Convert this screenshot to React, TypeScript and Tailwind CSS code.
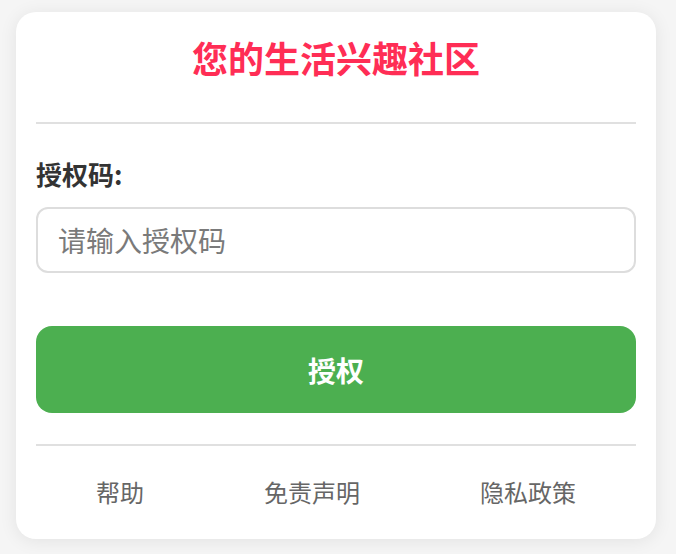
const links = ["帮助", "免责声明", "隐私政策"];

export default function App() {
  return (
    <div
      className="min-h-screen w-full bg-[#f5f5f5] pt-3"
      style={{ fontFamily: '"Noto Sans CJK SC", "Noto Sans", sans-serif' }}
    >
      <div className="mx-4 w-[640px] rounded-[20px] bg-white px-5 pt-[18px] pb-[29px] shadow-[0_2px_18px_rgba(0,0,0,0.08)]">
        {/* 标题 */}
        <h1 className="text-center text-[36px] leading-[54px] font-bold text-[#ff2d55]">
          您的生活兴趣社区
        </h1>

        <div className="mt-[38px] h-[2px] bg-[#e0e0e0]" />

        {/* 授权码 */}
        <label className="mt-[30px] block text-[26px] leading-[40px] font-bold text-[#333]">
          授权码:
        </label>
        <input
          type="text"
          placeholder="请输入授权码"
          className="mt-[13px] block h-[66px] w-full rounded-xl border-2 border-[#ddd] px-5 text-[28px] text-[#333] outline-none placeholder:text-[#7a7a7a]"
        />

        <button className="mt-[53px] flex h-[87px] w-full items-center justify-center rounded-2xl bg-[#4caf50] text-[28px] font-bold text-white">
          授权
        </button>

        <div className="mt-[31px] h-[2px] bg-[#e0e0e0]" />

        {/* 底部链接 */}
        <div className="mt-[28px] flex justify-around">
          {links.map((item) => (
            <a key={item} className="text-[24px] leading-[36px] text-[#666]">
              {item}
            </a>
          ))}
        </div>
      </div>
    </div>
  );
}
